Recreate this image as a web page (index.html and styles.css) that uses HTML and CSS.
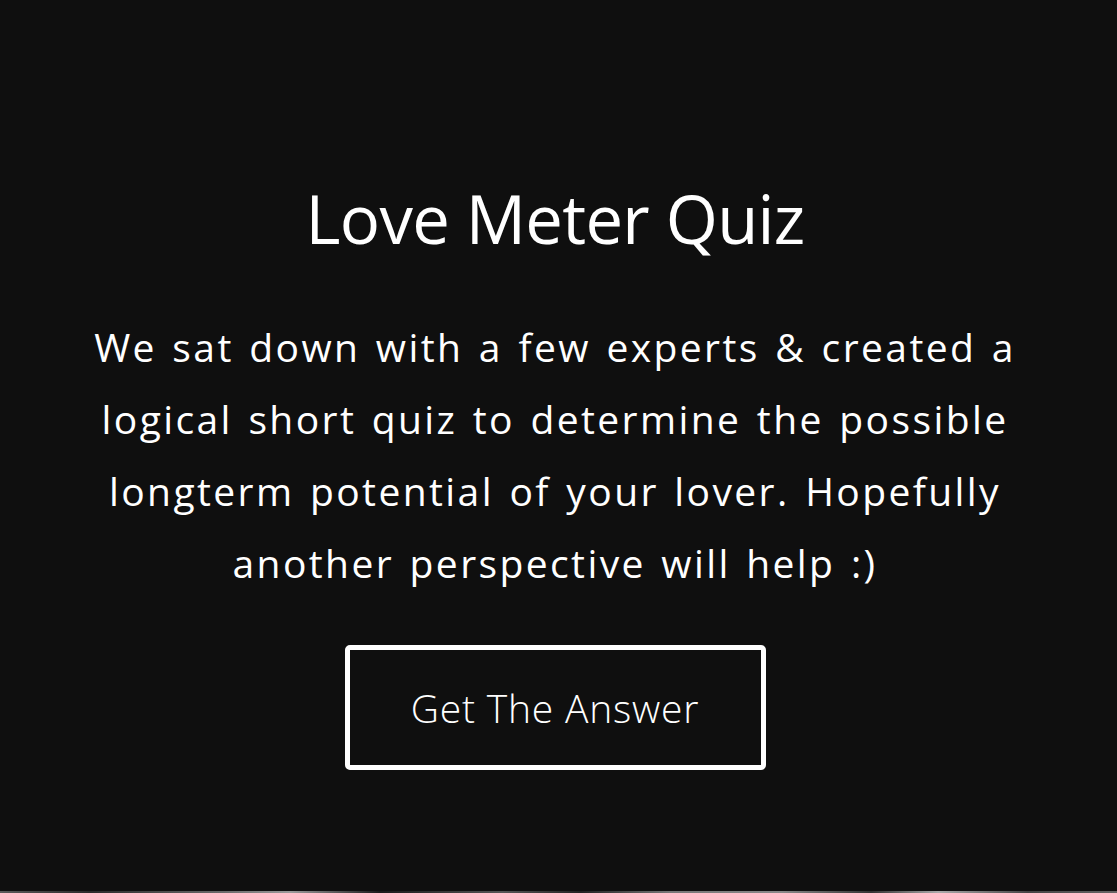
FILE: index.html
```html
<!DOCTYPE html>
<html lang="en">
<head>
<meta charset="utf-8">
<title>Love Meter Quiz</title>
<link rel="stylesheet" href="styles.css">
</head>
<body>
<main class="hero">
  <h1 class="hero-title">Love Meter Quiz</h1>
  <p class="hero-text">We sat down with a few experts &amp; created a<br>logical short quiz to determine the possible<br>longterm potential of your lover. Hopefully<br>another perspective will help :)</p>
  <a class="hero-button" href="#">Get The Answer</a>
</main>
<div class="photo-strip"></div>
</body>
</html>
```

FILE: styles.css
```css
html, body {
  margin: 0;
  padding: 0;
  background: #0f0f0f;
}
body {
  font-family: "Open Sans", "Lato", sans-serif;
  color: #ffffff;
  width: 1117px;
  height: 893px;
  overflow: hidden;
}
.hero {
  height: 891px;
  display: flex;
  flex-direction: column;
  align-items: center;
  box-sizing: border-box;
  padding: 178px 7px 0 0;
}
.hero-title {
  margin: 0;
  font-size: 67px;
  line-height: 80px;
  font-weight: 400;
  letter-spacing: -0.7px;
}
.hero-text {
  margin: 53px 0 0;
  font-size: 39px;
  line-height: 72px;
  text-align: center;
  font-weight: 400;
  letter-spacing: 2.4px;
  word-spacing: 3px;
}
.hero-button {
  margin-top: 46px;
  box-sizing: border-box;
  width: 421px;
  height: 125px;
  border: 5px solid #ffffff;
  border-radius: 5px;
  display: flex;
  align-items: center;
  justify-content: center;
  color: #ffffff;
  text-decoration: none;
  font-size: 39px;
  font-weight: 300;
  letter-spacing: 0.8px;
}
.photo-strip {
  height: 2px;
  background: linear-gradient(90deg, #5a5a5a 0%, #2a2a2a 8%, #6a6a6a 20%, #9a9a9a 26%, #1a1a1a 34%, #555 45%, #222 52%, #777 60%, #888 70%, #333 78%, #aaa 84%, #444 92%, #666 100%);
}
```
